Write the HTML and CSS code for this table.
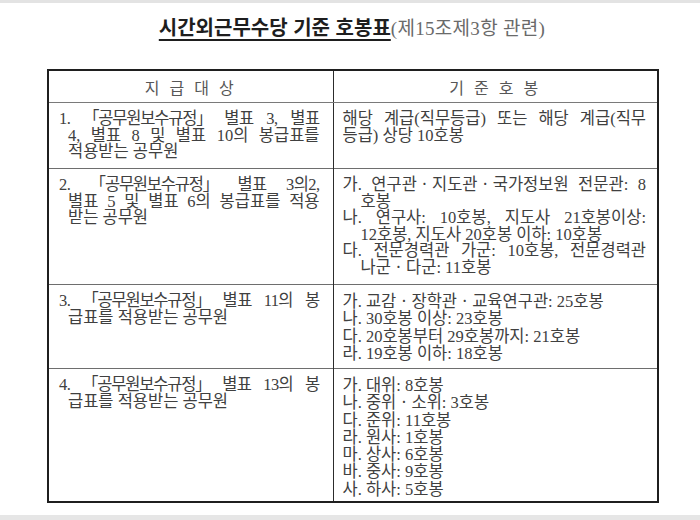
FILE: index.html
```html
<!DOCTYPE html>
<html lang="ko">
<head>
<meta charset="utf-8">
<title>시간외근무수당 기준 호봉표</title>
<link rel="stylesheet" href="styles.css">
</head>
<body>
<div class="page">
  <h1 class="title"><span class="main">시간외근무수당 기준 호봉표</span><span class="sub">(제15조제3항 관련)</span></h1>
  <table class="grid">
    <colgroup><col class="c1"><col class="c2"></colgroup>
    <thead>
      <tr class="hd"><th>지 급 대 상</th><th>기 준 호 봉</th></tr>
    </thead>
    <tbody>
      <tr class="r1">
        <td class="left">
          <span class="ln j cond">1. <span class="nb">「공무원보수규정」</span> 별표 3, 별표</span>
          <span class="ln j ind">4, 별표 8 및 별표 10의 봉급표를</span>
          <span class="ln ind">적용받는 공무원</span>
        </td>
        <td class="right">
          <span class="ln j">해당 계급(직무등급) 또는 해당 계급(직무</span>
          <span class="ln">등급) 상당 10호봉</span>
        </td>
      </tr>
      <tr class="r2">
        <td class="left">
          <span class="ln j cond">2. <span class="nb">「공무원보수규정」</span> 별표 3의2,</span>
          <span class="ln j ind">별표 5 및 별표 6의 봉급표를 적용</span>
          <span class="ln ind">받는 공무원</span>
        </td>
        <td class="right">
          <span class="ln j">가. 연구관ㆍ지도관ㆍ국가정보원 전문관: 8</span>
          <span class="ln ind2">호봉</span>
          <span class="ln j">나. 연구사: 10호봉, 지도사 21호봉이상:</span>
          <span class="ln ind2">12호봉, 지도사 20호봉 이하: 10호봉</span>
          <span class="ln j">다. 전문경력관 가군: 10호봉, 전문경력관</span>
          <span class="ln ind2">나군ㆍ다군: 11호봉</span>
        </td>
      </tr>
      <tr class="r3">
        <td class="left">
          <span class="ln j cond">3. <span class="nb">「공무원보수규정」</span> 별표 11의 봉</span>
          <span class="ln ind">급표를 적용받는 공무원</span>
        </td>
        <td class="right loose">
          <span class="ln">가. 교감ㆍ장학관ㆍ교육연구관: 25호봉</span>
          <span class="ln">나. 30호봉 이상: 23호봉</span>
          <span class="ln">다. 20호봉부터 29호봉까지: 21호봉</span>
          <span class="ln">라. 19호봉 이하: 18호봉</span>
        </td>
      </tr>
      <tr class="r4">
        <td class="left">
          <span class="ln j cond">4. <span class="nb">「공무원보수규정」</span> 별표 13의 봉</span>
          <span class="ln ind">급표를 적용받는 공무원</span>
        </td>
        <td class="right loose">
          <span class="ln">가. 대위: 8호봉</span>
          <span class="ln">나. 중위ㆍ소위: 3호봉</span>
          <span class="ln">다. 준위: 11호봉</span>
          <span class="ln">라. 원사: 1호봉</span>
          <span class="ln">마. 상사: 6호봉</span>
          <span class="ln">바. 중사: 9호봉</span>
          <span class="ln">사. 하사: 5호봉</span>
        </td>
      </tr>
    </tbody>
  </table>
</div>
</body>
</html>
```

FILE: styles.css
```css
html, body {
  margin: 0;
  padding: 0;
  background: #ffffff;
}

.page {
  width: 700px;
  height: 520px;
  box-sizing: border-box;
  border-top: 3px solid #e3e3e3;
  border-bottom: 5px solid #e6e6e6;
  padding: 0 43px 0 47px;
  font-family: "Liberation Serif", "Noto Sans CJK KR", serif;
  color: #404040;
}

.title {
  margin: 0;
  padding-top: 9px;
  height: 66px;
  box-sizing: border-box;
  text-align: center;
  font-weight: normal;
  line-height: 24px;
  white-space: nowrap;
}

.title .main {
  font-family: "Noto Sans CJK KR", sans-serif;
  font-weight: 700;
  font-size: 20px;
  color: #1e1e1e;
  text-decoration: underline;
  text-decoration-thickness: 2px;
  text-underline-offset: 4px;
}

.title .sub {
  font-size: 19px;
  color: #6a6a6a;
  letter-spacing: 0.3px;
}

.grid {
  width: 610px;
  border-collapse: collapse;
  border: 2px solid #1f1f1f;
  table-layout: fixed;
  font-size: 16.5px;
}

.grid .c1 { width: 285px; }
.grid .c2 { width: 325px; }

.grid th {
  height: 31px;
  padding: 0;
  font-weight: normal;
  font-size: 16px;
  color: #575757;
  letter-spacing: 3px;
  border-bottom: 1px solid #7a7a7a;
  border-left: 1px solid #2c2c2c;
  vertical-align: middle;
}

.grid td {
  vertical-align: top;
  padding: 8px 0 0 0;
  border-top: 1px solid #6e6e6e;
  border-left: 1px solid #2c2c2c;
  line-height: 16.5px;
}

.grid th:first-child,
.grid td:first-child {
  border-left: none;
}

.r1 td { height: 57px; }
.r2 td { height: 107px; }
.r3 td { height: 75px; }
.r4 td { height: 124px; }

.left {
  padding-left: 10px !important;
  padding-right: 13px !important;
}

.right {
  padding-left: 9px !important;
  padding-right: 11px !important;
}

.right.loose {
  line-height: 17.3px;
}

.ln {
  display: block;
  text-align: left;
}

.ln.j {
  text-align: justify;
  text-align-last: justify;
}

.ln.cond {
  letter-spacing: -0.6px;
}

.nb {
  display: inline-block;
  letter-spacing: -1.2px;
}

.ln.ind {
  padding-left: 9px;
}

.ln.ind2 {
  padding-left: 18px;
}
```
